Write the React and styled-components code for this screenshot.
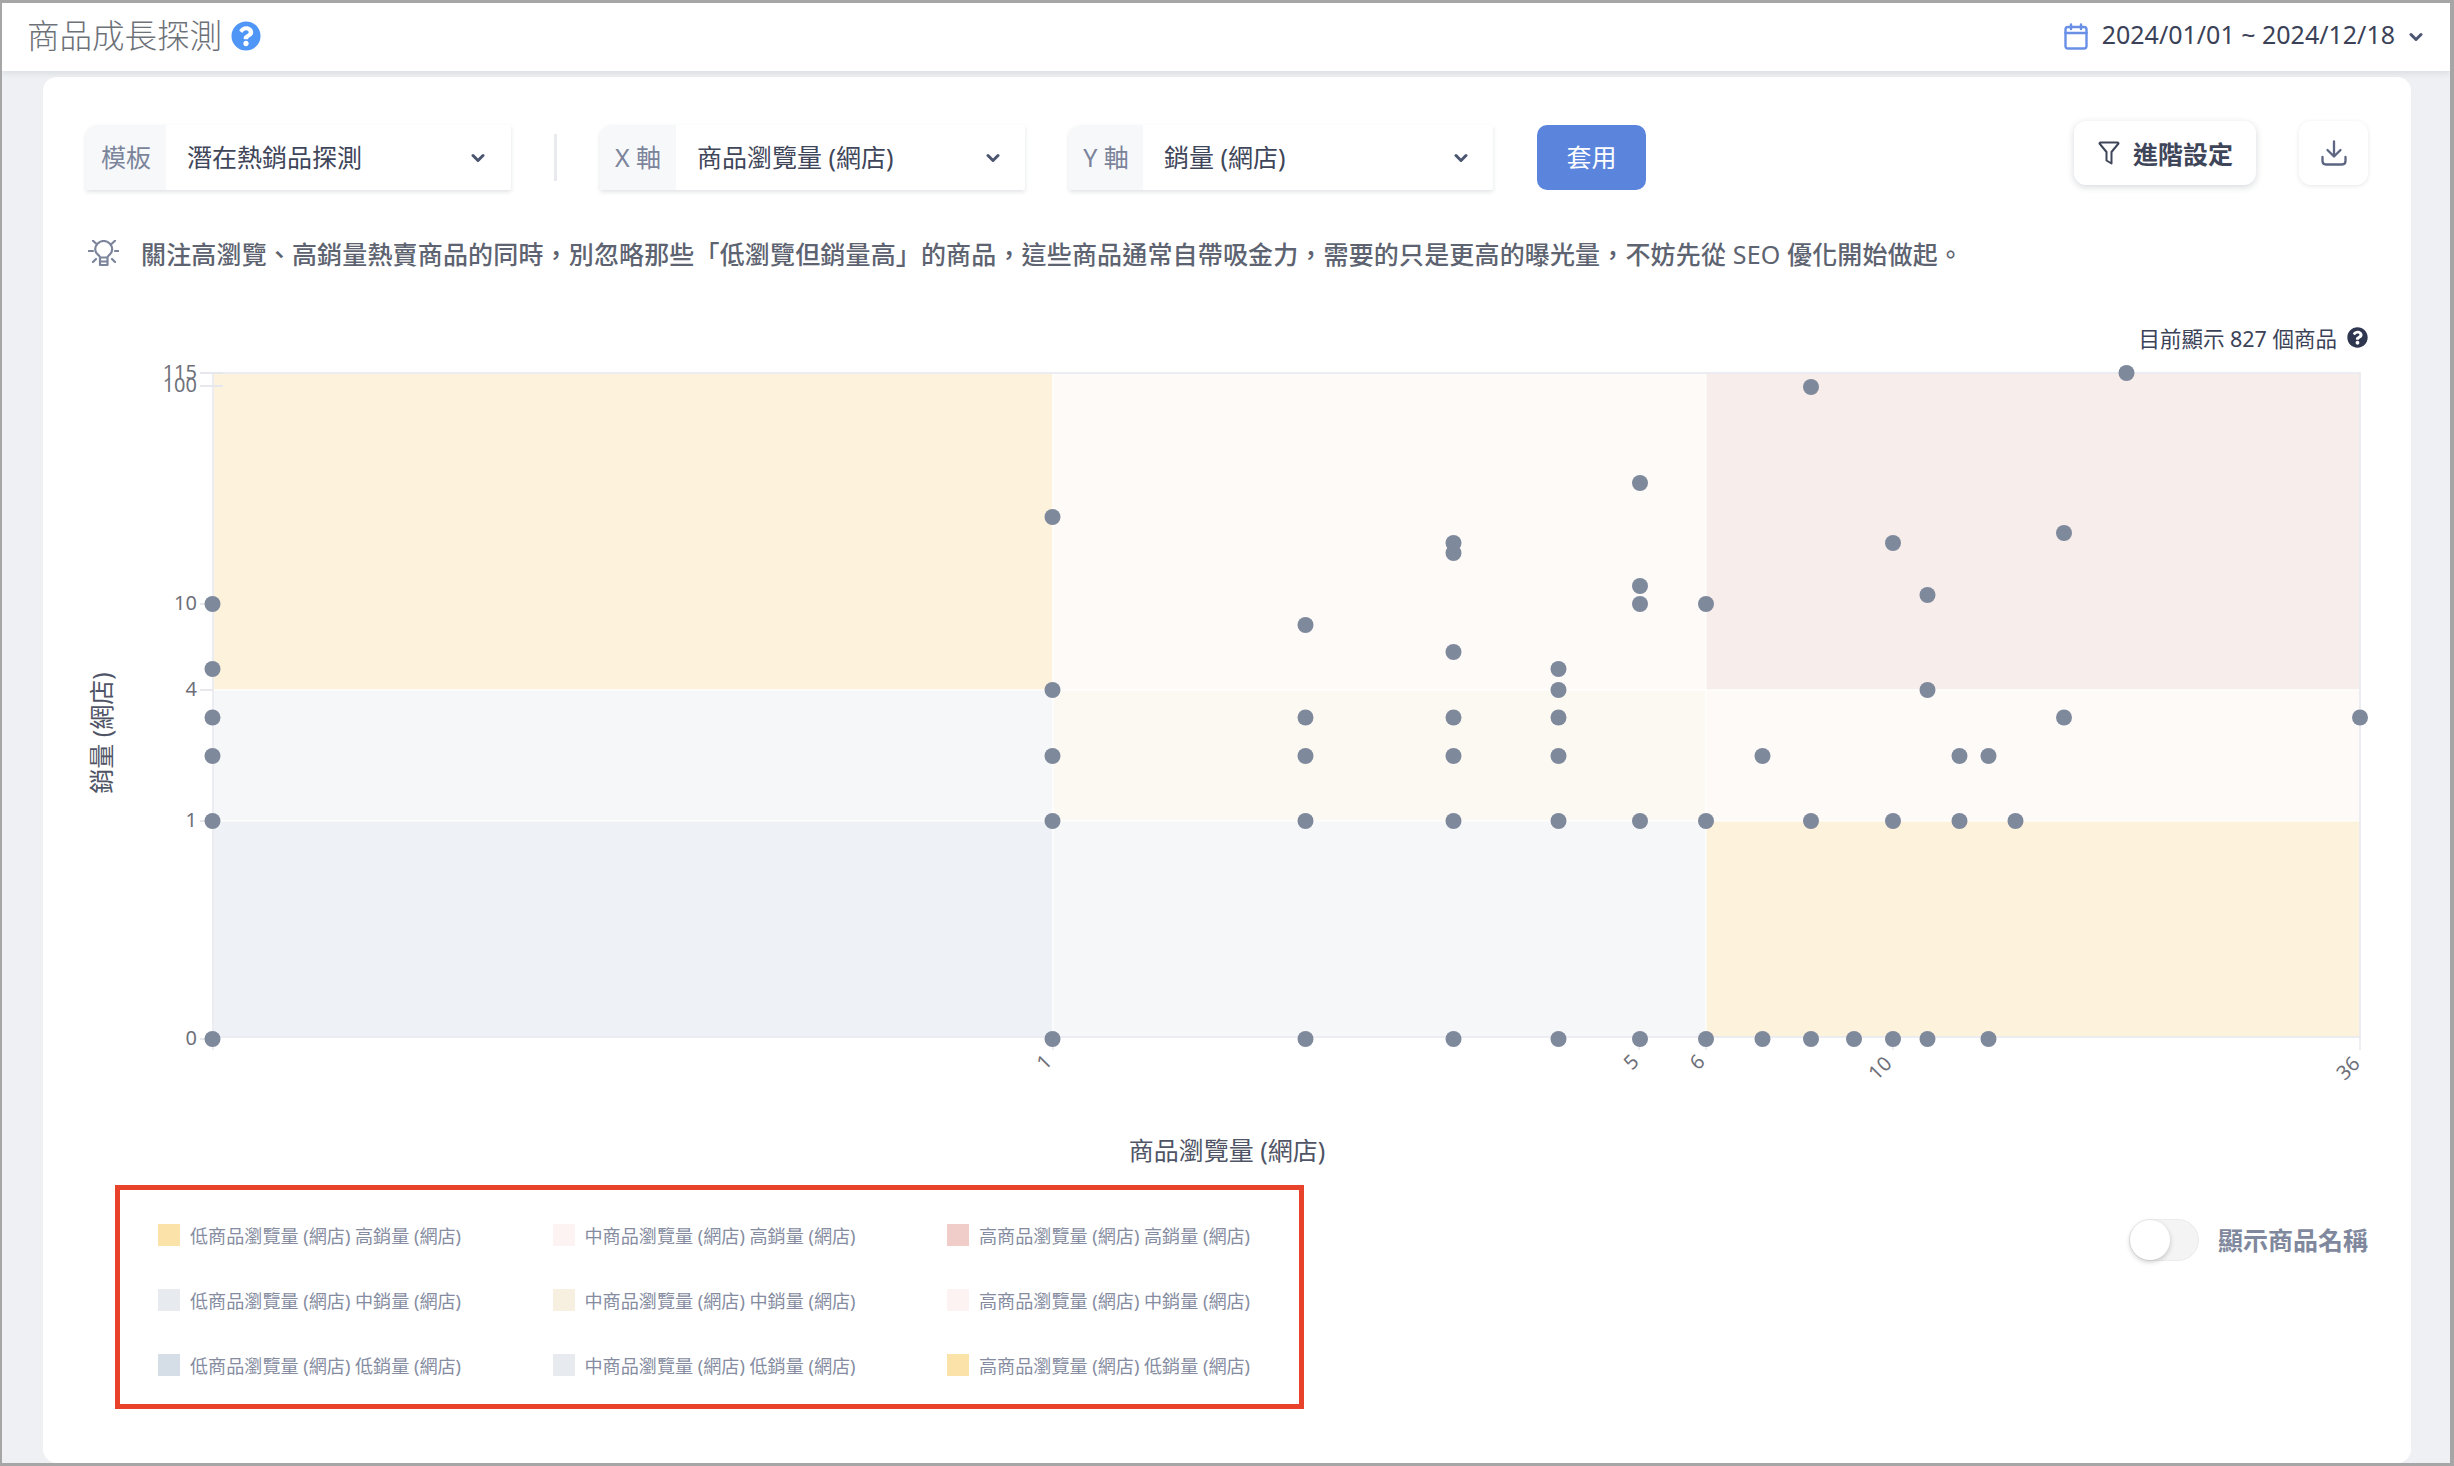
import React from "react";
import styled, { createGlobalStyle } from "styled-components";
import { FaQuestionCircle } from "react-icons/fa";

const GlobalStyle = createGlobalStyle`
	html, body {
		margin: 0;
		padding: 0;
		background: #a6a6a6;
	}
	* {
		box-sizing: border-box;
	}
`;

const Frame = styled.div`
	width: 2454px;
	height: 1466px;
	display: flex;
	flex-direction: column;
	overflow: hidden;
	background: #eef0f3;
	border-style: solid;
	border-color: #a6a6a6;
	border-width: 3px 4px 3px 2px;
	font-family: "Noto Sans", "Noto Sans CJK TC", sans-serif;
`;

const Header = styled.header`
	position: relative;
	z-index: 1;
	flex: 0 0 68px;
	display: flex;
	align-items: center;
	justify-content: space-between;
	padding: 0 27px 0 25px;
	background: #fff;
	box-shadow: 0 2px 6px rgba(60, 70, 90, 0.12);
`;

const TitleGroup = styled.div`
	display: flex;
	align-items: center;
	gap: 9px;
	padding-bottom: 3px;
`;

const Title = styled.h1`
	margin: 0;
	font-size: 32.5px;
	font-weight: 300;
	line-height: 44px;
	color: #6d7178;
`;

const HelpIcon = styled(FaQuestionCircle)`
	display: block;
	width: ${({ $size }) => $size}px;
	height: ${({ $size }) => $size}px;
	color: ${({ $color }) => $color};
`;

const DateRange = styled.div`
	display: flex;
	align-items: center;
	font-size: 25px;
	line-height: 34px;
	color: #3b4258;
	padding-bottom: 1px;
`;

const DateText = styled.span`
	margin: -5px 14px 0;
`;

const Main = styled.main`
	flex: 1;
	display: flex;
	min-height: 0;
	padding: 6px 39px 0 41px;
`;

const Card = styled.section`
	flex: 1;
	display: flex;
	flex-direction: column;
	padding: 44px 43px 0;
	background: #fff;
	border-radius: 14px;
`;

const Toolbar = styled.div`
	display: flex;
	align-items: flex-start;
	justify-content: space-between;
`;

const Filters = styled.div`
	display: flex;
	align-items: center;
	margin-top: 4px;
`;

const Select = styled.div`
	width: ${({ $width }) => $width}px;
	height: 65px;
	display: flex;
	align-items: center;
	background: #fff;
	border-radius: 12px 2px 2px 2px;
	box-shadow: 0 2px 4px rgba(50, 60, 80, 0.14);
	margin-right: ${({ $gap }) => $gap}px;
`;

const SelectLabel = styled.span`
	flex: 0 0 ${({ $width }) => $width}px;
	height: 100%;
	display: flex;
	align-items: center;
	justify-content: center;
	padding-bottom: 3px;
	font-size: 25px;
	color: #7b849a;
	background: #f7f8fa;
	border-radius: 12px 0 0 2px;
`;

const SelectValue = styled.span`
	flex: 1;
	padding: 0 0 3px 21px;
	font-size: 25px;
	color: #3f465a;
`;

const Chevron = styled.svg`
	flex: none;
	display: block;
	width: 14px;
	height: 10px;
	margin-right: ${({ $right }) => $right}px;
	fill: none;
	stroke: #4b5570;
	stroke-width: 3;
	stroke-linecap: round;
	stroke-linejoin: round;
`;

const Divider = styled.div`
	width: 3px;
	height: 47px;
	background: #e8eaee;
	margin-right: 43px;
`;

const ApplyButton = styled.button`
	width: 109px;
	height: 65px;
	border: 0;
	border-radius: 10px;
	padding: 0 0 3px;
	font-family: inherit;
	font-size: 25px;
	color: #fff;
	background: #5b85dd;
`;

const Actions = styled.div`
	display: flex;
	align-items: center;
	gap: 43px;
`;

const ActionButton = styled.button`
	height: 64px;
	display: flex;
	align-items: center;
	justify-content: center;
	gap: 13px;
	padding: 0 0 0 1px;
	width: ${({ $width }) => $width}px;
	border: 0;
	border-radius: 12px;
	font-family: inherit;
	font-size: 25px;
	font-weight: 700;
	color: #3f465a;
	background: #fff;
	box-shadow: ${({ $soft }) => ($soft ? "0 1px 4px rgba(50, 60, 80, 0.12)" : "0 2px 7px rgba(50, 60, 80, 0.2)")};
`;

const IconSvg = styled.svg`
	flex: none;
	display: block;
	fill: none;
	stroke: ${({ $stroke }) => $stroke};
	stroke-width: ${({ $weight }) => $weight || 2};
	stroke-linecap: round;
	stroke-linejoin: round;
`;

const Tip = styled.div`
	display: flex;
	align-items: center;
	gap: 22px;
	height: 30px;
	margin-top: 48px;
	margin-left: 2px;
	font-size: 25px;
	font-weight: 500;
	letter-spacing: 0.16px;
	white-space: nowrap;
	color: #5d6370;
`;

const TipLatin = styled.span`
	font-weight: 400;
`;

const CountRow = styled.div`
	display: flex;
	align-items: center;
	justify-content: flex-end;
	gap: 10px;
	height: 30px;
	margin-top: 54px;
	font-size: 21.5px;
	color: #3b4258;
`;

const ChartSvg = styled.svg`
	display: block;
	flex: none;
	margin-left: -20px;
`;

const TickLabel = styled.text`
	font-size: 20px;
	fill: #6e7079;
`;

const AxisTitle = styled.text`
	font-size: 25px;
	fill: #4f5566;
`;

const Footer = styled.div`
	display: flex;
	align-items: flex-start;
	justify-content: space-between;
	margin-left: 29px;
`;

const Legend = styled.div`
	width: 1189px;
	height: 224px;
	display: grid;
	grid-template-columns: repeat(3, 394.5px);
	grid-auto-rows: 22px;
	row-gap: 43px;
	padding: 34px 0 0 38px;
	border: 5px solid #e8422a;
`;

const LegendItem = styled.div`
	display: flex;
	align-items: center;
	gap: 10px;
	font-size: 18.1px;
	white-space: nowrap;
	color: #858ca1;
`;

const Swatch = styled.span`
	flex: none;
	width: 22px;
	height: 22px;
	background: ${({ $color }) => $color};
`;

const ToggleRow = styled.div`
	display: flex;
	align-items: center;
	gap: 19px;
	margin-top: 34px;
`;

const ToggleTrack = styled.div`
	width: 70px;
	height: 42px;
	display: flex;
	align-items: center;
	background: #f4f4f5;
	border: 1px solid #ececee;
	border-radius: 21px;
`;

const ToggleKnob = styled.div`
	width: 40px;
	height: 40px;
	border-radius: 50%;
	background: #fff;
	box-shadow: 0 2px 5px rgba(0, 0, 0, 0.2);
`;

const ToggleLabel = styled.span`
	padding-bottom: 3px;
	font-size: 25px;
	font-weight: 700;
	color: #7f889d;
`;

const PLOT = { left: 213, right: 2360, top: 373, bottom: 1037 };
const X1 = 1053;
const X2 = 1706;
const Y4 = 690;
const Y1 = 821;

const QUADRANTS = [
	{ x: PLOT.left, y: PLOT.top, w: X1 - PLOT.left, h: Y4 - PLOT.top, fill: "#fdf2dc" },
	{ x: X1, y: PLOT.top, w: X2 - X1, h: Y4 - PLOT.top, fill: "#fefaf8" },
	{ x: X2, y: PLOT.top, w: PLOT.right - X2, h: Y4 - PLOT.top, fill: "#f7edeb" },
	{ x: PLOT.left, y: Y4, w: X1 - PLOT.left, h: Y1 - Y4, fill: "#f6f7f9" },
	{ x: X1, y: Y4, w: X2 - X1, h: Y1 - Y4, fill: "#fcf9f2" },
	{ x: X2, y: Y4, w: PLOT.right - X2, h: Y1 - Y4, fill: "#fefaf8" },
	{ x: PLOT.left, y: Y1, w: X1 - PLOT.left, h: PLOT.bottom - Y1, fill: "#eef1f5" },
	{ x: X1, y: Y1, w: X2 - X1, h: PLOT.bottom - Y1, fill: "#f6f7f9" },
	{ x: X2, y: Y1, w: PLOT.right - X2, h: PLOT.bottom - Y1, fill: "#fdf2dc" },
];

// [x, [y, y, ...]] in page pixels
const DOTS = [
	[212.5, [604, 669, 717.5, 756, 821, 1039]],
	[1052.5, [517, 690, 756, 821, 1039]],
	[1305.5, [625, 717.5, 756, 821, 1039]],
	[1453.5, [543, 553, 652, 717.5, 756, 821, 1039]],
	[1558.5, [669, 690, 717.5, 756, 821, 1039]],
	[1640, [483, 586, 604, 821, 1039]],
	[1706, [604, 821, 1039]],
	[1762.5, [756, 1039]],
	[1811, [387, 821, 1039]],
	[1854, [1039]],
	[1893, [543, 821, 1039]],
	[1927.5, [595, 690, 1039]],
	[1959.5, [756, 821]],
	[1988.5, [756, 1039]],
	[2015.5, [821]],
	[2064, [533, 717.5]],
	[2126.5, [373]],
	[2360, [717.5]],
];

const Y_TICKS = [
	{ y: 373, label: "115", long: true },
	{ y: 386, label: "100", long: true },
	{ y: 604, label: "10" },
	{ y: 690, label: "4" },
	{ y: 821, label: "1" },
	{ y: 1039, label: "0" },
];

const X_TICKS = [
	{ x: 213 },
	{ x: 1053, label: "1", lx: 1053, ly: 1063 },
	{ x: 1639, label: "5", lx: 1640, ly: 1063 },
	{ x: 1706, label: "6", lx: 1706, ly: 1063 },
	{ x: 1893, label: "10", lx: 1893, ly: 1065 },
	{ x: 2360, label: "36", lx: 2361, ly: 1065 },
];

const LEGEND = [
	["低商品瀏覽量 (網店) 高銷量 (網店)", "#fbe2a8"],
	["中商品瀏覽量 (網店) 高銷量 (網店)", "#fdf3f2"],
	["高商品瀏覽量 (網店) 高銷量 (網店)", "#f0cdc9"],
	["低商品瀏覽量 (網店) 中銷量 (網店)", "#e7eaef"],
	["中商品瀏覽量 (網店) 中銷量 (網店)", "#f7f0e0"],
	["高商品瀏覽量 (網店) 中銷量 (網店)", "#fdf3f2"],
	["低商品瀏覽量 (網店) 低銷量 (網店)", "#d5dee7"],
	["中商品瀏覽量 (網店) 低銷量 (網店)", "#e7eaef"],
	["高商品瀏覽量 (網店) 低銷量 (網店)", "#fbe2a8"],
];

function ChevronDown({ right = 0 }) {
	return (
		<Chevron viewBox="0 0 14 10" $right={right}>
			<path d="M2 2.5 L7 7.5 L12 2.5" />
		</Chevron>
	);
}

function Chart() {
	return (
		<ChartSvg width="2302" height="833" viewBox="66 352 2302 833">
			{QUADRANTS.map((q, i) => (
				<rect key={i} x={q.x} y={q.y} width={q.w} height={q.h} fill={q.fill} stroke="#fff" strokeWidth="1" />
			))}
			<rect x={PLOT.left} y={PLOT.top} width={PLOT.right - PLOT.left} height={PLOT.bottom - PLOT.top} fill="none" stroke="#e6e8ee" strokeWidth="1.5" />
			{Y_TICKS.map((t) => (
				<g key={t.label}>
					<line x1="200" x2={t.long ? 223 : 213} y1={t.y} y2={t.y} stroke="#e6e8ee" strokeWidth="2" />
					<TickLabel x="197" y={t.y + 6} textAnchor="end">{t.label}</TickLabel>
				</g>
			))}
			{X_TICKS.map((t) => (
				<g key={t.x}>
					<line x1={t.x} x2={t.x} y1={PLOT.bottom} y2={PLOT.bottom + 13} stroke="#e6e8ee" strokeWidth="1.5" />
					{t.label && (
						<TickLabel x={t.lx} y={t.ly} textAnchor="end" transform={`rotate(-45 ${t.lx} ${t.ly})`}>{t.label}</TickLabel>
					)}
				</g>
			))}
			{DOTS.flatMap(([x, ys]) =>
				ys.map((y) => <circle key={`${x}-${y}`} cx={x} cy={y} r="8" fill="#7f899c" />)
			)}
			<AxisTitle x="1227" y="1160" textAnchor="middle">商品瀏覽量 (網店)</AxisTitle>
			<AxisTitle x="111" y="733" textAnchor="middle" transform="rotate(-90 111 733)">銷量 (網店)</AxisTitle>
		</ChartSvg>
	);
}

export default function App() {
	return (
		<Frame>
			<GlobalStyle />
			<Header>
				<TitleGroup>
					<Title>商品成長探測</Title>
					<HelpIcon $size={30} $color="#4f96f6" />
				</TitleGroup>
				<DateRange>
					<IconSvg width="24" height="27" viewBox="0 0 24 27" $stroke="#6a90e6" $weight={2.4}>
						<rect x="1.5" y="4" width="21" height="21.5" rx="2.5" />
						<path d="M1.5 10 H22.5 M7 1.5 V6 M17 1.5 V6" />
					</IconSvg>
					<DateText>2024/01/01 ~ 2024/12/18</DateText>
					<ChevronDown />
				</DateRange>
			</Header>
			<Main>
				<Card>
					<Toolbar>
						<Filters>
							<Select $width={425} $gap={43}>
								<SelectLabel $width={80}>模板</SelectLabel>
								<SelectValue>潛在熱銷品探測</SelectValue>
								<ChevronDown right={26} />
							</Select>
							<Divider />
							<Select $width={425} $gap={44}>
								<SelectLabel $width={76}>X 軸</SelectLabel>
								<SelectValue>商品瀏覽量 (網店)</SelectValue>
								<ChevronDown right={25} />
							</Select>
							<Select $width={424} $gap={44}>
								<SelectLabel $width={74}>Y 軸</SelectLabel>
								<SelectValue>銷量 (網店)</SelectValue>
								<ChevronDown right={25} />
							</Select>
							<ApplyButton>套用</ApplyButton>
						</Filters>
						<Actions>
							<ActionButton $width={182}>
								<IconSvg width="22" height="24" viewBox="0 0 22 24" $stroke="#3f465a" $weight={2}>
									<path d="M1.5 2.5 Q1.5 1.5 2.5 1.5 H19.5 Q20.5 1.5 20.5 2.5 L13.5 11 V22.5 L8.5 19.5 V11 Z" />
								</IconSvg>
								進階設定
							</ActionButton>
							<ActionButton $width={69} $soft>
								<IconSvg width="26" height="26" viewBox="0 0 26 26" $stroke="#5c6682" $weight={2.3}>
									<path d="M13 1.5 V16 M6.5 10 L13 16.5 L19.5 10 M1.5 17 V21 Q1.5 24.5 5 24.5 H21 Q24.5 24.5 24.5 21 V17" />
								</IconSvg>
							</ActionButton>
						</Actions>
					</Toolbar>
					<Tip>
						<IconSvg width="31" height="27" viewBox="0 0 31 27" $stroke="#7b849a" $weight={2.2}>
							<path d="M12 17.5 C12 15 7.2 14.5 7.2 9.5 A8.5 8.5 0 0 1 24.2 9.5 C24.2 14.5 19.5 15 19.5 17.5 Z M12 17.5 V25 H19.5 V17.5 M12 21.5 H19.5 M5 0.8 L8 3.5 M27 0.8 L24 3.5 M0.8 11 H5 M27 11 H30.2 M5 22 L8 19 M27 22 L24 19" />
						</IconSvg>
						<span>
							關注高瀏覽、高銷量熱賣商品的同時，別忽略那些「低瀏覽但銷量高」的商品，這些商品通常自帶吸金力，需要的只是更高的曝光量，不妨先從 <TipLatin>SEO</TipLatin> 優化開始做起。
						</span>
					</Tip>
					<CountRow>
						目前顯示 827 個商品
						<HelpIcon $size={21} $color="#2f3650" />
					</CountRow>
					<Chart />
					<Footer>
						<Legend>
							{LEGEND.map(([label, color]) => (
								<LegendItem key={label}>
									<Swatch $color={color} />
									{label}
								</LegendItem>
							))}
						</Legend>
						<ToggleRow>
							<ToggleTrack>
								<ToggleKnob />
							</ToggleTrack>
							<ToggleLabel>顯示商品名稱</ToggleLabel>
						</ToggleRow>
					</Footer>
				</Card>
			</Main>
		</Frame>
	);
}
